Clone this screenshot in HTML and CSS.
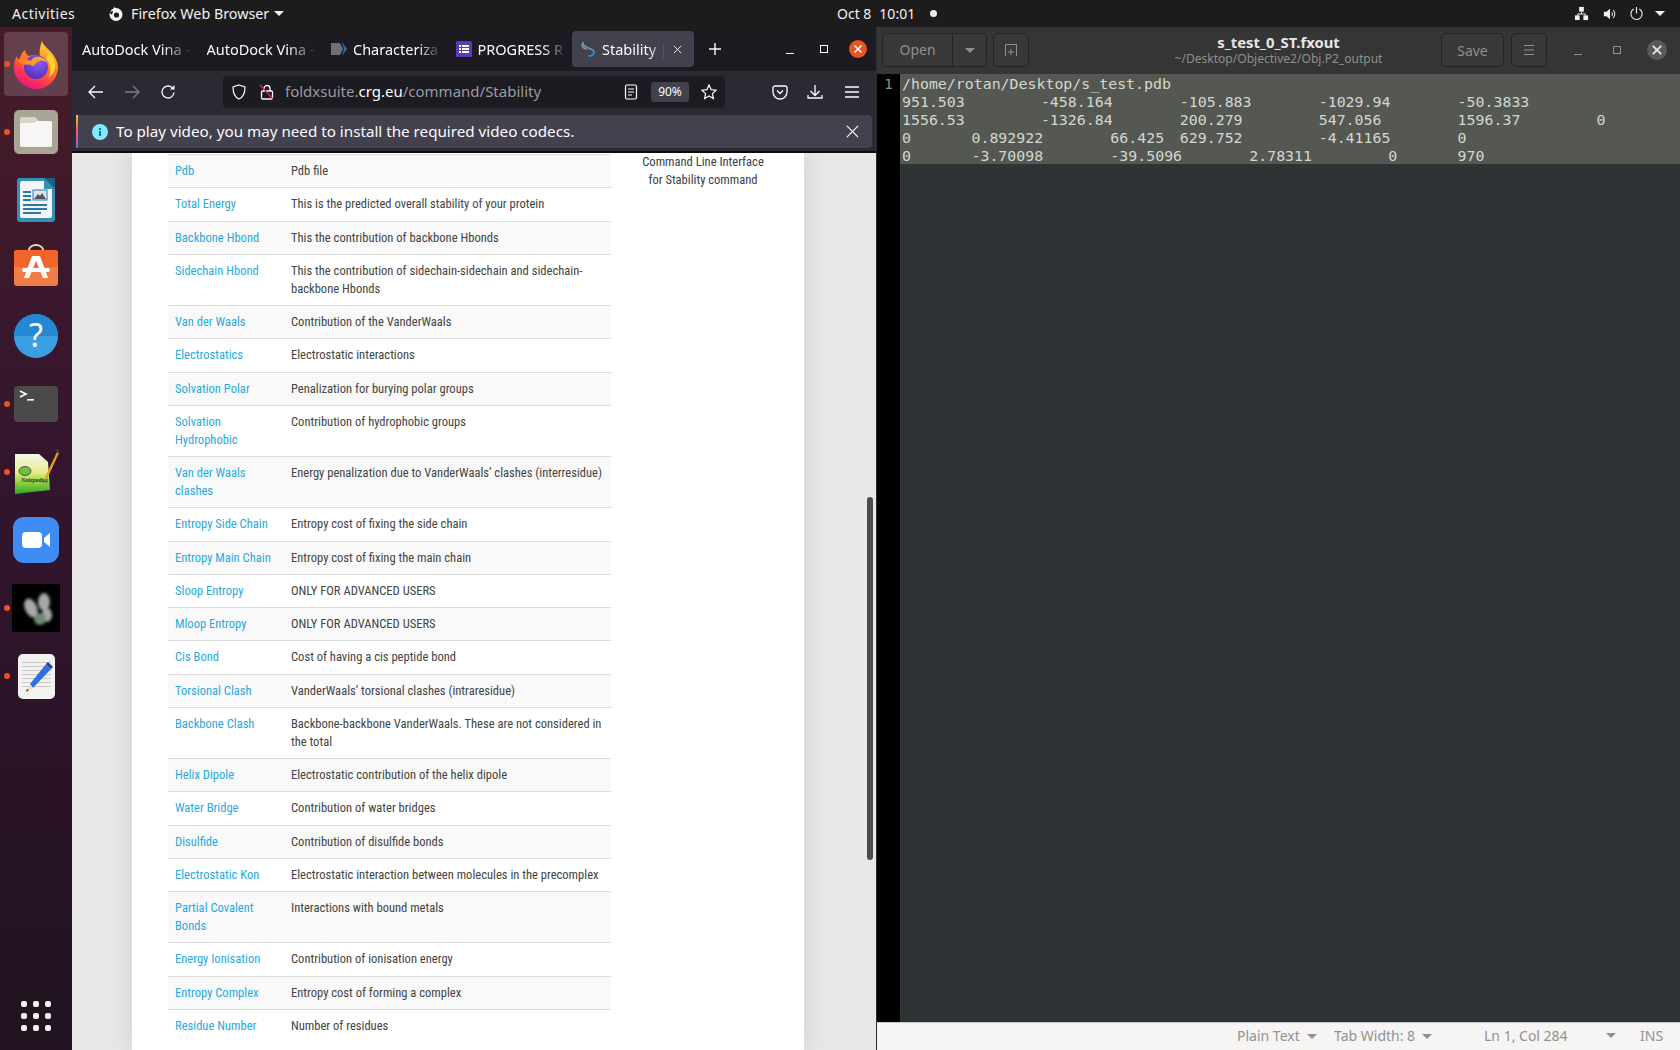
FILE: index.html
```html
<!DOCTYPE html>
<html lang="en">
  <head>
    <meta charset="UTF-8" />
    <title>Stability | FoldX Suite</title>
    <link rel="stylesheet" href="styles.css">
  </head>
  <body>
    <!-- gnome top bar -->
    <header class="topbar">
      <div class="top-left">
        <span class="activities">Activities</span>
        <svg class="app-icon" viewBox="0 0 16 16"><circle cx="8" cy="8.5" r="6.5" fill="#f2f2f2"/><circle cx="8.5" cy="9" r="2.6" fill="#1c1c1c"/><path d="M6 1 L9 3 L5 4 Z" fill="#f2f2f2"/><path d="M1 6 L5 5 L4 9 Z" fill="#1c1c1c"/></svg>
        <span class="app-name">Firefox Web Browser</span>
        <i class="tri tri-white"></i>
      </div>
      <div class="clock"><span>Oct 8</span><span>10:01</span><i class="rec-dot"></i></div>
      <div class="top-right">
        <svg class="net-icon" viewBox="0 0 16 16" fill="#f2f2f2"><rect x="5.5" y="1" width="5" height="5"/><rect x="1" y="10" width="5" height="5"/><rect x="10" y="10" width="5" height="5"/><path d="M7.5 6h1v2h4v2h-1V9h-7v1h-1V8h4z"/></svg>
        <svg class="vol-icon" viewBox="0 0 16 16" fill="#f2f2f2"><path d="M1 5.5h3L8 2v12L4 10.5H1z"/><path d="M10 5a4 4 0 0 1 0 6zM12 3a7 7 0 0 1 0 10l-.8-.8a6 6 0 0 0 0-8.4z"/></svg>
        <svg class="pow-icon" viewBox="0 0 16 16" fill="none" stroke="#f2f2f2" stroke-width="1.2"><path d="M5 3.2a6 6 0 1 0 6 0M8 1v7"/></svg>
        <i class="tri tri-white"></i>
      </div>
    </header>

    <div class="desk">
      <!-- ubuntu dock -->
      <nav class="dock">
        <div class="dock-item active">
          <i class="run-dot"></i>
          <svg width="48" height="50" viewBox="0 0 48 50">
            <defs>
              <linearGradient id="fxBody" x1="0.8" y1="0" x2="0.3" y2="1"><stop offset="0" stop-color="#ffe23d"/><stop offset="0.4" stop-color="#ff8a1f"/><stop offset="0.75" stop-color="#ff3750"/><stop offset="1" stop-color="#e31587"/></linearGradient>
              <radialGradient id="fxGlobe" cx="0.6" cy="0.3" r="0.8"><stop offset="0" stop-color="#9059ff"/><stop offset="1" stop-color="#4a2fb0"/></radialGradient>
              <linearGradient id="fxFox" x1="0" y1="0" x2="1" y2="0"><stop offset="0" stop-color="#ff7a1a"/><stop offset="1" stop-color="#ffb82e"/></linearGradient>
            </defs>
            <path d="M30 2c1 4 4 6 8 10 6 6 8 12 8 17a22 22 0 1 1-44-2c0-4 1-7 3-10 0 2 1 3 2 4 1-4 3-8 6-10 0 3 2 5 4 6 3-1 7-1 11 1-1-5 0-11 2-16z" fill="url(#fxBody)"/>
            <circle cx="24" cy="28" r="12" fill="url(#fxGlobe)"/>
            <path d="M5 21c6-2 10-1 14 1 1-3 5-5 9-4 3 1 6 3 8 6-3-2-6-3-9-2-3 1-4 3-5 5-3-1-7-2-10-1-3-1-5-3-7-5z" fill="url(#fxFox)"/>
            <path d="M34 19c5 6 6 14 2 20 5-3 8-9 7-15-1-4-3-7-6-10z" fill="#ffcf33"/>
          </svg>
        </div>
        <div class="dock-item">
          <i class="run-dot"></i>
          <svg width="44" height="44" viewBox="0 0 44 44"><rect width="44" height="44" rx="5" fill="#a9a493"/><path d="M6 9a2 2 0 0 1 2-2h13l4 4h11a2 2 0 0 1 2 2v22a2 2 0 0 1-2 2H8a2 2 0 0 1-2-2z" fill="#d8d5cb"/><path d="M6 15a2 2 0 0 1 2-2h12l3-2h13a2 2 0 0 1 2 2v22a2 2 0 0 1-2 2H8a2 2 0 0 1-2-2z" fill="#f7f6f4"/></svg>
        </div>
        <div class="dock-item">
          <svg width="38" height="44" viewBox="0 0 38 44"><path d="M3 0h27l8 8v33a3 3 0 0 1-3 3H3a3 3 0 0 1-3-3V3a3 3 0 0 1 3-3z" fill="#3490b8"/><path d="M5 3h22v8h8v27a2 2 0 0 1-2 2H5a2 2 0 0 1-2-2V5a2 2 0 0 1 2-2z" fill="#f2f6f8"/><path d="M27 0l11 11V0z" fill="#1d5e86"/><g fill="#2a78a8"><rect x="6" y="13" width="8" height="2"/><rect x="6" y="17" width="8" height="2"/><rect x="6" y="21" width="8" height="2"/><rect x="6" y="26" width="24" height="2"/><rect x="6" y="30" width="24" height="2"/><rect x="6" y="34" width="18" height="2"/></g><rect x="16" y="12" width="14" height="10" fill="#dbe7ee" stroke="#2a78a8"/><path d="M17 21l4-5 2 2 2-3 4 6z" fill="#555"/></svg>
        </div>
        <div class="dock-item store-item">
          <svg width="44" height="44" viewBox="0 0 44 44"><path d="M15 8V6a7 5 0 0 1 14 0v2" fill="none" stroke="#f3d3b5" stroke-width="2"/><rect y="6" width="44" height="36" rx="3" fill="#ef7d45"/><rect y="6" width="44" height="17" rx="3" fill="#f0662a"/><path d="M18 12h8l8 22h-5l-7-17-7 17h-5z" fill="#fff"/><rect x="8" y="24" width="28" height="4" rx="2" fill="#fff"/></svg>
        </div>
        <div class="dock-item">
          <svg width="44" height="44" viewBox="0 0 44 44"><circle cx="22" cy="22" r="22" fill="#3a9fe0"/><path d="M0 22a22 22 0 0 1 44 0z" fill="#2488d4"/><text x="22" y="33" class="help-mark">?</text></svg>
        </div>
        <div class="dock-item">
          <i class="run-dot"></i>
          <svg width="44" height="36" viewBox="0 0 44 36"><rect width="44" height="36" rx="4" fill="#4a4a4a"/><path d="M6 5l6 3-6 3" fill="none" stroke="#fff" stroke-width="1.6"/><rect x="13" y="13" width="7" height="1.6" fill="#fff"/></svg>
        </div>
        <div class="dock-item">
          <i class="run-dot"></i>
          <svg width="46" height="46" viewBox="0 0 46 46">
            <defs><linearGradient id="noteBg" x1="0" y1="0" x2="0" y2="1"><stop offset="0" stop-color="#f6f6f2"/><stop offset="0.45" stop-color="#e8ef8a"/><stop offset="0.72" stop-color="#8fd03f"/><stop offset="1" stop-color="#2fa52f"/></linearGradient></defs>
            <path d="M2 5h24l9 8 2 28-35 4z" fill="url(#noteBg)"/>
            <ellipse cx="12" cy="22" rx="6" ry="4.500" fill="#6fbf40" stroke="#223" stroke-width="0.7"/>
            <text x="8" y="33" class="note-mark">Notepadqq</text>
            <path d="M32 28L44 3l2 1-12 26-2 1z" fill="#e0a020"/>
            <path d="M44 0l2 1-1 3-2-1z" fill="#5c3a30"/>
          </svg>
        </div>
        <div class="dock-item">
          <svg width="46" height="46" viewBox="0 0 46 46"><rect width="46" height="46" rx="11" fill="#3f8cf5"/><rect x="9" y="15" width="20" height="16" rx="4" fill="#fff"/><path d="M31 21l6-5v14l-6-5z" fill="#fff"/></svg>
        </div>
        <div class="dock-item">
          <i class="run-dot"></i>
          <svg width="48" height="48" viewBox="0 0 48 48">
            <defs><filter id="soft"><feGaussianBlur stdDeviation="1.800"/></filter></defs>
            <rect width="48" height="48" fill="#000"/>
            <g filter="url(#soft)" fill="#a4aaa5"><ellipse cx="19" cy="24" rx="6" ry="10" transform="rotate(-25 19 24)"/><ellipse cx="32" cy="18" rx="6" ry="9"/><ellipse cx="35" cy="31" rx="5" ry="7"/><ellipse cx="28" cy="35" rx="6" ry="6" fill="#6f8a72"/></g>
          </svg>
        </div>
        <div class="dock-item">
          <i class="run-dot"></i>
          <svg width="37" height="45" viewBox="0 0 37 45"><rect width="37" height="45" rx="5" fill="#f2f2f0"/><g fill="#c9c9c9"><rect x="4" y="8" width="29" height="1"/><rect x="4" y="12" width="29" height="1"/><rect x="4" y="16" width="29" height="1"/><rect x="4" y="20" width="29" height="1"/><rect x="4" y="24" width="29" height="1"/><rect x="4" y="28" width="29" height="1"/><rect x="4" y="32" width="29" height="1"/></g><path d="M12 30L28 10l5 5-18 19z" fill="#2f6fde"/><path d="M28 10l2-2 5 5-2 2z" fill="#173f99"/><path d="M12 30l3 4-6 3z" fill="#f6d9b0"/><path d="M9 35l2 1-3 2z" fill="#333"/></svg>
        </div>
        <div class="dock-item grid-item">
          <div class="app-grid">
            <i></i><i></i><i></i><i></i><i></i><i></i><i></i><i></i><i></i>
          </div>
        </div>
      </nav>

      <!-- firefox window -->
      <section class="browser">
        <div class="tabstrip">
          <div class="tab"><span class="tab-title">AutoDock Vina -</span></div>
          <div class="tab"><span class="tab-title">AutoDock Vina -</span></div>
          <div class="tab">
            <svg class="tab-icon" viewBox="0 0 16 16"><path d="M0 2h9l3 6-3 6H0z" fill="#6f6f74"/><path d="M11 1l5 7-5 7 2-7z" fill="#1e73be"/></svg>
            <span class="tab-title">Characteriza</span>
          </div>
          <div class="tab">
            <svg class="tab-icon" viewBox="0 0 16 16"><rect width="16" height="16" rx="1.5" fill="#5b3ab5"/><g fill="#fff"><rect x="3" y="4" width="2" height="2"/><rect x="6" y="4" width="7" height="2"/><rect x="3" y="7" width="2" height="2"/><rect x="6" y="7" width="7" height="2"/><rect x="3" y="10" width="2" height="2"/><rect x="6" y="10" width="7" height="2"/></g></svg>
            <span class="tab-title">PROGRESS R</span>
          </div>
          <div class="tab current">
            <svg class="tab-icon" viewBox="0 0 16 16" fill="none" stroke-width="1.8" stroke-linecap="round"><path d="M3 2c0 6 10 4 11 9" stroke="#5a8fb8"/><path d="M3 2c-2 3 0 5 3 6" stroke="#8a8f96"/><path d="M14 11c0 3-2 4-5 4" stroke="#1e90d6"/></svg>
            <span class="tab-title">Stability | F</span>
            <svg class="tab-close" viewBox="0 0 10 10" stroke="#fbfbfe" stroke-width="1"><path d="M1 1l8 8M9 1l-8 8"/></svg>
          </div>
          <svg class="new-tab" viewBox="0 0 12 12" stroke="#fbfbfe" stroke-width="1.4"><path d="M6 0v12M0 6h12"/></svg>
          <div class="win-btns">
            <span class="min-btn"></span>
            <span class="max-btn"></span>
            <span class="close-btn"><svg viewBox="0 0 10 10" stroke="#fff" stroke-width="1.6"><path d="M1.5 1.5l7 7M8.5 1.5l-7 7"/></svg></span>
          </div>
        </div>

        <div class="toolbar">
          <span class="tool"><svg viewBox="0 0 16 16" fill="none" stroke="#fbfbfe" stroke-width="1.3"><path d="M15 8H1M7 2L1 8l6 6"/></svg></span>
          <span class="tool off"><svg viewBox="0 0 16 16" fill="none" stroke="#fbfbfe" stroke-width="1.3"><path d="M1 8h14M9 2l6 6-6 6"/></svg></span>
          <span class="tool"><svg viewBox="0 0 16 16" fill="none" stroke="#fbfbfe" stroke-width="1.3"><path d="M14 8.5a6 6 0 1 1-2-5"/><path d="M14.5 1v4.5H10z" fill="#fbfbfe" stroke="none"/></svg></span>
          <div class="urlbar">
            <svg class="url-icon" viewBox="0 0 16 16" fill="none" stroke="#fbfbfe" stroke-width="1.2"><path d="M8 1l6 2c0 6-1 10-6 12C3 13 2 9 2 3z"/></svg>
            <svg class="url-icon lock" viewBox="0 0 16 16" fill="none" stroke="#fbfbfe" stroke-width="1.3"><path d="M5 7V4.500a3 3 0 0 1 6 0V7"/><rect x="2.5" y="7" width="11" height="8" fill="#1c1b22" rx="1"/><path d="M1 1l13 14" stroke="#e22850"/></svg>
            <span class="url-text">foldxsuite.<b>crg.eu</b>/command/Stability</span>
            <svg class="url-icon reader" viewBox="0 0 16 16" fill="none" stroke="#fbfbfe" stroke-width="1.2"><rect x="2.5" y="1" width="11" height="14" rx="1.5"/><path d="M5 5h6M5 8h6M5 11h4"/></svg>
            <span class="zoom-chip">90%</span>
            <svg class="url-icon star" viewBox="0 0 16 16" fill="none" stroke="#fbfbfe" stroke-width="1.2"><path d="M8 1l2.100 4.600 5 .6-3.700 3.400 1 5L8 12l-4.400 2.600 1-5L.9 6.200l5-.6z"/></svg>
          </div>
          <span class="tool tool-pocket"><svg viewBox="0 0 16 16" fill="none" stroke="#fbfbfe" stroke-width="1.3"><path d="M1 4a2 2 0 0 1 2-2h10a2 2 0 0 1 2 2v4a7 7 0 0 1-14 0z"/><path d="M5 6.500l3 3 3-3"/></svg></span>
          <span class="tool tool-down"><svg viewBox="0 0 16 16" fill="none" stroke="#fbfbfe" stroke-width="1.3"><path d="M8 1v10M3.500 7l4.500 4.500L12.500 7M1 11v3h14v-3"/></svg></span>
          <span class="tool tool-menu"><svg viewBox="0 0 16 16" fill="none" stroke="#fbfbfe" stroke-width="1.3"><path d="M1 3h14M1 8h14M1 13h14"/></svg></span>
        </div>

        <div class="infobar-wrap">
          <div class="infobar">
            <svg class="info-icon" viewBox="0 0 16 16"><circle cx="8" cy="8" r="8" fill="#80ebff"/><rect x="7" y="7" width="2" height="5" fill="#1c6f9c"/><rect x="7" y="4" width="2" height="2" fill="#1c6f9c"/></svg>
            <span class="info-text">To play video, you may need to install the required video codecs.</span>
            <svg class="info-close" viewBox="0 0 14 14" stroke="#fbfbfe" stroke-width="1.3"><path d="M1 1l12 12M13 1L1 13"/></svg>
          </div>
        </div>

        <main class="page">
          <div class="card">
            <table class="params">
              <colgroup><col class="col-name"><col></colgroup>
              <tbody>
                <tr><td><a href="#">Pdb</a></td><td>Pdb file</td></tr>
                <tr><td><a href="#">Total Energy</a></td><td>This is the predicted overall stability of your protein</td></tr>
                <tr><td><a href="#">Backbone Hbond</a></td><td>This the contribution of backbone Hbonds</td></tr>
                <tr><td><a href="#">Sidechain Hbond</a></td><td>This the contribution of sidechain-sidechain and sidechain-backbone Hbonds</td></tr>
                <tr><td><a href="#">Van der Waals</a></td><td>Contribution of the VanderWaals</td></tr>
                <tr><td><a href="#">Electrostatics</a></td><td>Electrostatic interactions</td></tr>
                <tr><td><a href="#">Solvation Polar</a></td><td>Penalization for burying polar groups</td></tr>
                <tr><td><a href="#">Solvation Hydrophobic</a></td><td>Contribution of hydrophobic groups</td></tr>
                <tr><td><a href="#">Van der Waals clashes</a></td><td>Energy penalization due to VanderWaals’ clashes (interresidue)</td></tr>
                <tr><td><a href="#">Entropy Side Chain</a></td><td>Entropy cost of fixing the side chain</td></tr>
                <tr><td><a href="#">Entropy Main Chain</a></td><td>Entropy cost of fixing the main chain</td></tr>
                <tr><td><a href="#">Sloop Entropy</a></td><td>ONLY FOR ADVANCED USERS</td></tr>
                <tr><td><a href="#">Mloop Entropy</a></td><td>ONLY FOR ADVANCED USERS</td></tr>
                <tr><td><a href="#">Cis Bond</a></td><td>Cost of having a cis peptide bond</td></tr>
                <tr><td><a href="#">Torsional Clash</a></td><td>VanderWaals’ torsional clashes (intraresidue)</td></tr>
                <tr><td><a href="#">Backbone Clash</a></td><td>Backbone-backbone VanderWaals. These are not considered in the total</td></tr>
                <tr><td><a href="#">Helix Dipole</a></td><td>Electrostatic contribution of the helix dipole</td></tr>
                <tr><td><a href="#">Water Bridge</a></td><td>Contribution of water bridges</td></tr>
                <tr><td><a href="#">Disulfide</a></td><td>Contribution of disulfide bonds</td></tr>
                <tr><td><a href="#">Electrostatic Kon</a></td><td>Electrostatic interaction between molecules in the precomplex</td></tr>
                <tr><td><a href="#">Partial Covalent Bonds</a></td><td>Interactions with bound metals</td></tr>
                <tr><td><a href="#">Energy Ionisation</a></td><td>Contribution of ionisation energy</td></tr>
                <tr><td><a href="#">Entropy Complex</a></td><td>Entropy cost of forming a complex</td></tr>
                <tr><td><a href="#">Residue Number</a></td><td>Number of residues</td></tr>
              </tbody>
            </table>
            <aside class="side-note">Command Line Interface<br>for Stability command</aside>
          </div>
          <div class="scroll-thumb"></div>
        </main>
      </section>

      <!-- gedit window -->
      <section class="editor">
        <div class="ed-header">
          <div class="ed-left">
            <div class="ed-btn open-group"><span class="open-label">Open</span><span class="open-arrow"><i class="tri tri-grey"></i></span></div>
            <div class="ed-btn new-doc"><svg viewBox="0 0 14 14" fill="none" stroke="#8f8f8f"><path d="M1.500 13V1.500h11V13M7 6v6M4 9h6"/></svg></div>
          </div>
          <div class="ed-title">
            <strong>s_test_0_ST.fxout</strong>
            <span>~/Desktop/Objective2/Obj.P2_output</span>
          </div>
          <div class="ed-right">
            <div class="ed-btn save-btn">Save</div>
            <div class="ed-btn menu-btn"><svg viewBox="0 0 12 12" stroke="#8f8f8f"><path d="M1 1.500h10M1 6h10M1 10.500h10"/></svg></div>
            <span class="ed-min"></span>
            <span class="ed-max"></span>
            <span class="ed-close"><svg viewBox="0 0 10 10" stroke="#e8e8e8" stroke-width="1.300"><path d="M2 2l6 6M8 2l-6 6"/></svg></span>
          </div>
        </div>
        <div class="ed-body">
          <div class="gutter">1</div>
          <div class="ed-text"><pre class="selected">/home/rotan/Desktop/s_test.pdb
951.503		-458.164	-105.883	-1029.94	-50.3833
1556.53		-1326.84	200.279		547.056		1596.37		0
0	0.892922	66.425	629.752		-4.41165	0
0	-3.70098	-39.5096	2.78311		0	970</pre></div>
        </div>
        <footer class="statusbar">
          <span class="st-plain">Plain Text<i class="tri tri-status"></i></span>
          <span class="st-tab">Tab Width: 8<i class="tri tri-status"></i></span>
          <span class="st-pos">Ln 1, Col 284<i class="tri tri-status push"></i></span>
          <span class="st-ins">INS</span>
        </footer>
      </section>
    </div>
  </body>
</html>
```

FILE: styles.css
```css
* {
  margin: 0;
  padding: 0;
  box-sizing: border-box;
}
html,
body {
  height: 100%;
  overflow: hidden;
}
body {
  font-family: "Noto Sans", sans-serif;
  display: flex;
  flex-direction: column;
  background: #000;
}
svg {
  display: block;
  flex: none;
}

/* triangles */
.tri {
  display: inline-block;
  width: 0;
  height: 0;
  border-left: 5px solid transparent;
  border-right: 5px solid transparent;
  border-top: 5px solid #f2f2f2;
}
.tri-grey {
  border-top-color: #8f8f8f;
}
.tri-status {
  border-top-color: #929292;
  margin-left: 7px;
  vertical-align: 2px;
}

/* top bar */
.topbar {
  height: 27px;
  flex: none;
  background: #1c1c1c;
  color: #f2f2f2;
  font-size: 14px;
  display: flex;
  align-items: center;
}
.top-left {
  width: 837px;
  padding-left: 12px;
  display: flex;
  align-items: center;
}
.activities {
  width: 96px;
  letter-spacing: 0.5px;
}
.app-name {
  margin-left: 7px;
  font-size: 14.3px;
}
.app-icon {
  width: 16px;
  height: 16px;
}
.top-left .tri {
  margin-left: 5px;
}
.clock {
  display: flex;
  align-items: center;
  gap: 8px;
}
.rec-dot {
  width: 7px;
  height: 7px;
  border-radius: 50%;
  background: #f2f2f2;
  margin-left: 7px;
}
.top-right {
  margin-left: auto;
  padding-right: 15px;
  display: flex;
  align-items: center;
}
.net-icon {
  width: 15px;
  height: 15px;
}
.vol-icon {
  width: 14px;
  height: 14px;
  margin-left: 14px;
}
.pow-icon {
  width: 15px;
  height: 15px;
  margin-left: 12px;
}
.top-right .tri {
  margin-left: 11px;
}

.desk {
  flex: 1;
  min-height: 0;
  display: flex;
}

/* dock */
.dock {
  width: 72px;
  flex: none;
  padding-top: 3px;
  display: flex;
  flex-direction: column;
  background: linear-gradient(#471c29, #32152e 45%, #20131f);
}
.dock-item {
  height: 68px;
  flex: none;
  position: relative;
  display: flex;
  align-items: center;
  justify-content: center;
}
.dock-item.active::before {
  content: "";
  position: absolute;
  left: 4px;
  top: 2px;
  width: 64px;
  height: 64px;
  border-radius: 4px;
  background: rgba(255, 255, 255, 0.16);
}
.dock-item svg {
  position: relative;
}
.store-item {
  padding-bottom: 4px;
}
.run-dot {
  position: absolute;
  left: 4px;
  top: 31px;
  width: 6px;
  height: 6px;
  border-radius: 50%;
  background: #e95420;
  z-index: 1;
}
.help-mark {
  font-family: "Noto Sans", sans-serif;
  font-size: 32px;
  fill: #fff;
  text-anchor: middle;
}
.note-mark {
  font-family: "Liberation Serif", serif;
  font-style: italic;
  font-weight: bold;
  font-size: 6px;
  fill: #233;
}
.grid-item {
  margin-top: auto;
}
.app-grid {
  display: grid;
  grid-template-columns: repeat(3, 6px);
  gap: 6px;
}
.app-grid i {
  height: 6px;
  border-radius: 2px;
  background: #f0f0f0;
}

/* firefox */
.browser {
  width: 804px;
  flex: none;
  display: flex;
  flex-direction: column;
  background: #2b2a33;
}
.tabstrip {
  height: 44px;
  flex: none;
  background: #1c1b22;
  padding: 4px 0 4px 1px;
  display: flex;
  align-items: stretch;
  gap: 3.5px;
  color: #fbfbfe;
  font-size: 14.5px;
}
.tab {
  width: 121px;
  flex: none;
  border-radius: 4px;
  padding-left: 9px;
  display: flex;
  align-items: center;
  gap: 6px;
}
.tab.current {
  width: 122px;
  margin-left: 1px;
  padding-left: 8px;
  padding-right: 12px;
  background: #42414d;
}
.tab-title {
  flex: 1;
  min-width: 0;
  white-space: nowrap;
  -webkit-mask-image: linear-gradient(to right, #000 72%, transparent 98%);
  mask-image: linear-gradient(to right, #000 72%, transparent 98%);
}
.tab-icon {
  width: 16px;
  height: 16px;
}
.tab-close {
  width: 9px;
  height: 9px;
}
.new-tab {
  width: 12px;
  height: 12px;
  align-self: center;
  margin-left: 11px;
}
.win-btns {
  margin-left: auto;
  display: flex;
  align-items: center;
  padding-right: 9px;
}
.min-btn {
  width: 8px;
  height: 1px;
  background: #fbfbfe;
  margin-top: 8px;
}
.max-btn {
  width: 8px;
  height: 8px;
  border: 1px solid #fbfbfe;
  margin-left: 26px;
}
.close-btn {
  width: 18px;
  height: 18px;
  border-radius: 50%;
  background: #e95420;
  margin-left: 21px;
  padding: 4px;
}
.toolbar {
  height: 42px;
  flex: none;
  padding-left: 6px;
  display: flex;
  align-items: center;
  background: #2b2a33;
}
.tool {
  width: 36px;
  height: 32px;
  display: flex;
  align-items: center;
  justify-content: center;
}
.tool svg {
  width: 16px;
  height: 16px;
}
.tool.off {
  opacity: 0.4;
}
.urlbar {
  width: 502px;
  height: 32px;
  margin-left: 37px;
  margin-right: 38px;
  padding: 0 8px;
  border-radius: 4px;
  background: #1c1b22;
  display: flex;
  align-items: center;
}
.url-icon {
  width: 16px;
  height: 16px;
}
.lock {
  margin-left: 12px;
}
.url-text {
  margin-left: 10px;
  margin-bottom: 2px;
  font-size: 15px;
  color: #9a9aa1;
}
.url-text b {
  font-weight: normal;
  color: #fbfbfe;
}
.reader {
  margin-left: auto;
}
.zoom-chip {
  width: 38px;
  height: 20px;
  margin: 0 12px;
  border-radius: 3px;
  background: #42414d;
  color: #fbfbfe;
  font-size: 12px;
  line-height: 20px;
  text-align: center;
}
.tool-pocket,
.tool-down {
  width: 34px;
}
.tool-down {
  margin-left: 1px;
}
.tool-menu {
  width: 34px;
  margin-left: 3px;
}
.infobar-wrap {
  height: 40px;
  flex: none;
  padding: 2px 4px 0;
  background: #2b2a33;
  border-bottom: 2px solid #0c0c0d;
}
.infobar {
  height: 33px;
  border-radius: 4px;
  background: #42414d;
  border-left: 2px solid;
  border-image: linear-gradient(#ffbd4f, #ff5a5a 45%, #9059ff) 1;
  padding-left: 14px;
  padding-right: 13px;
  display: flex;
  align-items: center;
  color: #fbfbfe;
  font-size: 15.200px;
}
.info-icon {
  width: 16px;
  height: 16px;
  margin-right: 8px;
}
.info-text {
  margin-bottom: 2px;
}
.info-close {
  width: 13px;
  height: 13px;
  margin-left: auto;
}

/* page content */
.page {
  flex: 1;
  min-height: 0;
  position: relative;
  overflow: hidden;
  background: #e8e8e8;
}
.card {
  width: 672px;
  height: 100%;
  margin-left: 60px;
  padding-left: 36px;
  background: #fff;
  box-shadow: 0 0 28px rgba(0, 0, 0, 0.12);
  display: flex;
  align-items: flex-start;
}
.params {
  width: 443px;
  flex: none;
  margin-top: 1px;
  table-layout: fixed;
  border-collapse: collapse;
  font-family: "Roboto Condensed", Roboto, sans-serif;
  font-stretch: condensed;
  font-size: 12.550px;
  line-height: 18px;
  color: #444;
}
.col-name {
  width: 116px;
}
.params td {
  padding: 7.130px 5px 7.130px 7px;
  border-top: 1px solid #ddd;
  vertical-align: top;
}
.params tr:nth-child(odd) {
  background: #f9f9f9;
}
.params a {
  color: #29a9e0;
  text-decoration: none;
}
.side-note {
  flex: 1;
  padding-right: 9px;
  text-align: center;
  font-family: "Roboto Condensed", Roboto, sans-serif;
  font-stretch: condensed;
  font-size: 12.550px;
  line-height: 18px;
  color: #3a3f47;
}
.scroll-thumb {
  position: absolute;
  right: 3px;
  top: 344px;
  width: 6px;
  height: 363px;
  border-radius: 3px;
  background: #4c4c4c;
}

/* gedit */
.editor {
  flex: 1;
  min-width: 0;
  display: flex;
  flex-direction: column;
  border-left: 1px solid #2c2c2c;
  background: #2e3436;
}
.ed-header {
  height: 47px;
  flex: none;
  padding: 6px 5px 7px;
  background: #353535;
  color: #8f8f8f;
  font-size: 14px;
  display: grid;
  grid-template-columns: 1fr auto 1fr;
  align-items: center;
}
.ed-left,
.ed-right {
  display: flex;
  align-items: center;
  height: 34px;
}
.ed-right {
  justify-content: flex-end;
}
.ed-btn {
  height: 34px;
  border: 1px solid #232323;
  border-radius: 5px;
  background: #383838;
  display: flex;
  align-items: center;
  justify-content: center;
}
.open-group {
  width: 105px;
}
.open-label {
  width: 70px;
  text-align: center;
  line-height: 32px;
  border-right: 1px solid #232323;
}
.open-arrow {
  flex: 1;
  text-align: center;
  line-height: 0;
}
.new-doc {
  width: 36px;
  margin-left: 6px;
}
.new-doc svg {
  width: 14px;
  height: 14px;
}
.ed-title {
  text-align: center;
  line-height: 16px;
}
.ed-title strong {
  display: block;
  color: #e6e6e6;
  font-size: 14.800px;
}
.ed-title span {
  font-size: 12.050px;
}
.save-btn {
  width: 63px;
}
.menu-btn {
  width: 36px;
  margin-left: 7px;
}
.menu-btn svg {
  width: 12px;
  height: 12px;
}
.ed-min {
  width: 8px;
  height: 1px;
  background: #8f8f8f;
  margin: 8px 0 0 27px;
}
.ed-max {
  width: 8px;
  height: 8px;
  border: 1px solid #8f8f8f;
  margin-left: 31px;
}
.ed-close {
  width: 20px;
  height: 20px;
  border-radius: 50%;
  background: #5a5a5a;
  margin: 0 8px 0 26px;
  padding: 3px;
}
.ed-body {
  flex: 1;
  min-height: 0;
  display: flex;
}
.gutter {
  width: 23px;
  flex: none;
  padding-top: 1px;
  padding-right: 7px;
  background: #000;
  color: #888a85;
  font-family: "DejaVu Sans Mono", monospace;
  font-size: 14.9px;
  line-height: 18px;
  text-align: right;
}
.ed-text {
  flex: 1;
  min-width: 0;
}
.selected {
  height: 90px;
  padding-left: 2px;
  padding-top: 1px;
  background: #555753;
  color: #d3d7cf;
  font-family: "DejaVu Sans Mono", monospace;
  font-size: 14.9px;
  line-height: 18px;
  tab-size: 69.45px;
}
.statusbar {
  height: 28px;
  flex: none;
  padding-left: 360px;
  padding-bottom: 2px;
  background: #f6f5f4;
  border-top: 1px solid #cdc7c2;
  color: #929292;
  font-size: 14px;
  display: flex;
  align-items: center;
}
.st-plain {
  width: 97px;
}
.st-tab {
  width: 150px;
}
.st-pos {
  width: 156px;
  display: flex;
  align-items: center;
}
.tri-status.push {
  margin-left: 38px;
}
```
